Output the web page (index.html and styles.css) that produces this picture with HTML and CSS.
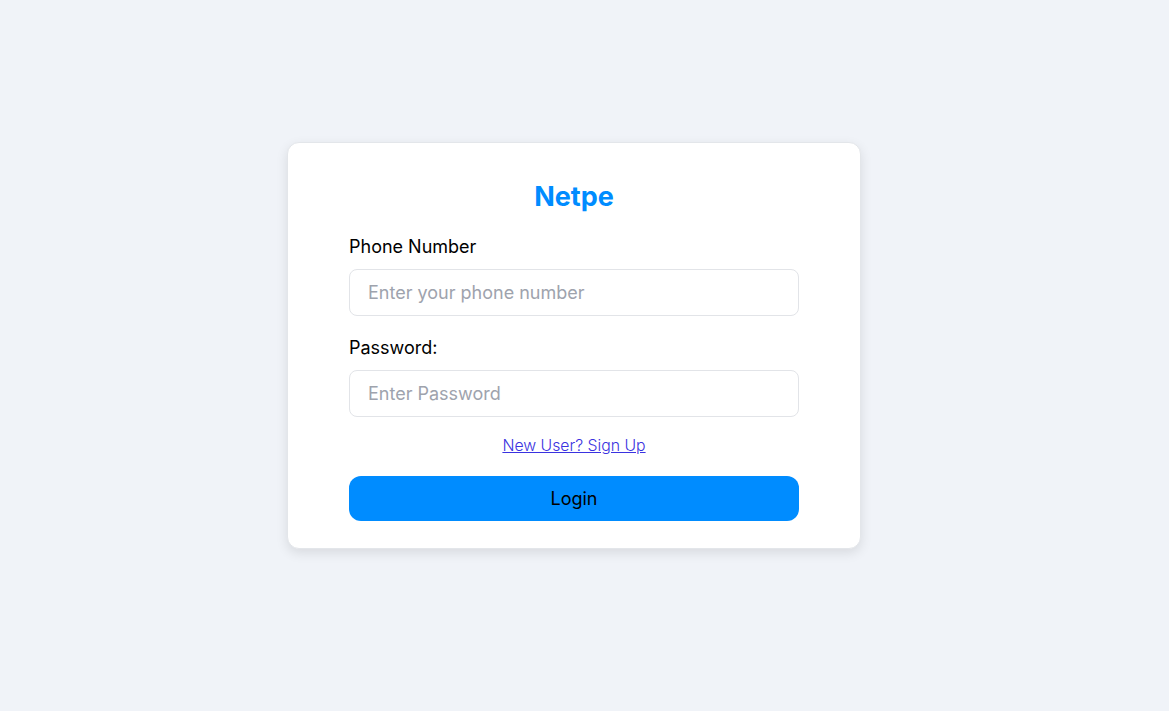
FILE: index.html
```html
<!DOCTYPE html>
<html lang="en">
<head>
<meta charset="utf-8">
<title>Netpe</title>
<link rel="stylesheet" href="styles.css">
</head>
<body>
<div class="page">
  <form class="card">
    <h1 class="brand">Netpe</h1>
    <div class="field">
      <label class="label" for="phone">Phone Number</label>
      <input class="input" id="phone" type="text" placeholder="Enter your phone number">
    </div>
    <div class="field">
      <label class="label" for="pw">Password:</label>
      <input class="input" id="pw" type="password" placeholder="Enter Password">
    </div>
    <a class="link" href="#">New User? Sign Up</a>
    <button class="btn" type="button">Login</button>
  </form>
</div>
</body>
</html>
```

FILE: styles.css
```css
* { box-sizing: border-box; }
html, body { margin: 0; padding: 0; }
body {
  background: #f0f3f8;
  font-family: Inter, "Noto Sans", sans-serif;
  color: #000;
}
.page {
  min-height: 100vh;
  display: flex;
  align-items: center;
  justify-content: center;
  padding: 0 21px 20px 0;
}
.card {
  flex: 0 0 574px;
  width: 574px;
  background: #fff;
  border: 1px solid #e3e6ea;
  border-radius: 12px;
  box-shadow: 0 4px 12px rgba(0, 0, 0, 0.1);
  padding: 37px 61px 27px;
  display: flex;
  flex-direction: column;
}
.brand {
  margin: 0 0 22px;
  text-align: center;
  font-size: 27px;
  line-height: 34px;
  font-weight: 700;
  color: #008cff;
}
.field {
  display: flex;
  flex-direction: column;
  margin-bottom: 21px;
}
.label {
  font-size: 18px;
  line-height: 22px;
  margin-bottom: 11px;
}
.input {
  height: 47px;
  border: 1px solid #e2e4e8;
  border-radius: 8px;
  padding: 0 18px;
  font-family: inherit;
  font-size: 18px;
  color: #000;
  background: #fff;
  outline: none;
}
.input::placeholder { color: #9ea3ad; }
.link {
  align-self: center;
  margin-top: -2px;
  font-size: 15.8px;
  line-height: 19px;
  font-weight: 300;
  color: #3a32e0;
  text-decoration: underline;
}
.btn {
  margin-top: 21px;
  height: 45px;
  border: none;
  border-radius: 12px;
  background: #008cff;
  color: #000;
  font-family: inherit;
  font-size: 18px;
  cursor: pointer;
}
```
